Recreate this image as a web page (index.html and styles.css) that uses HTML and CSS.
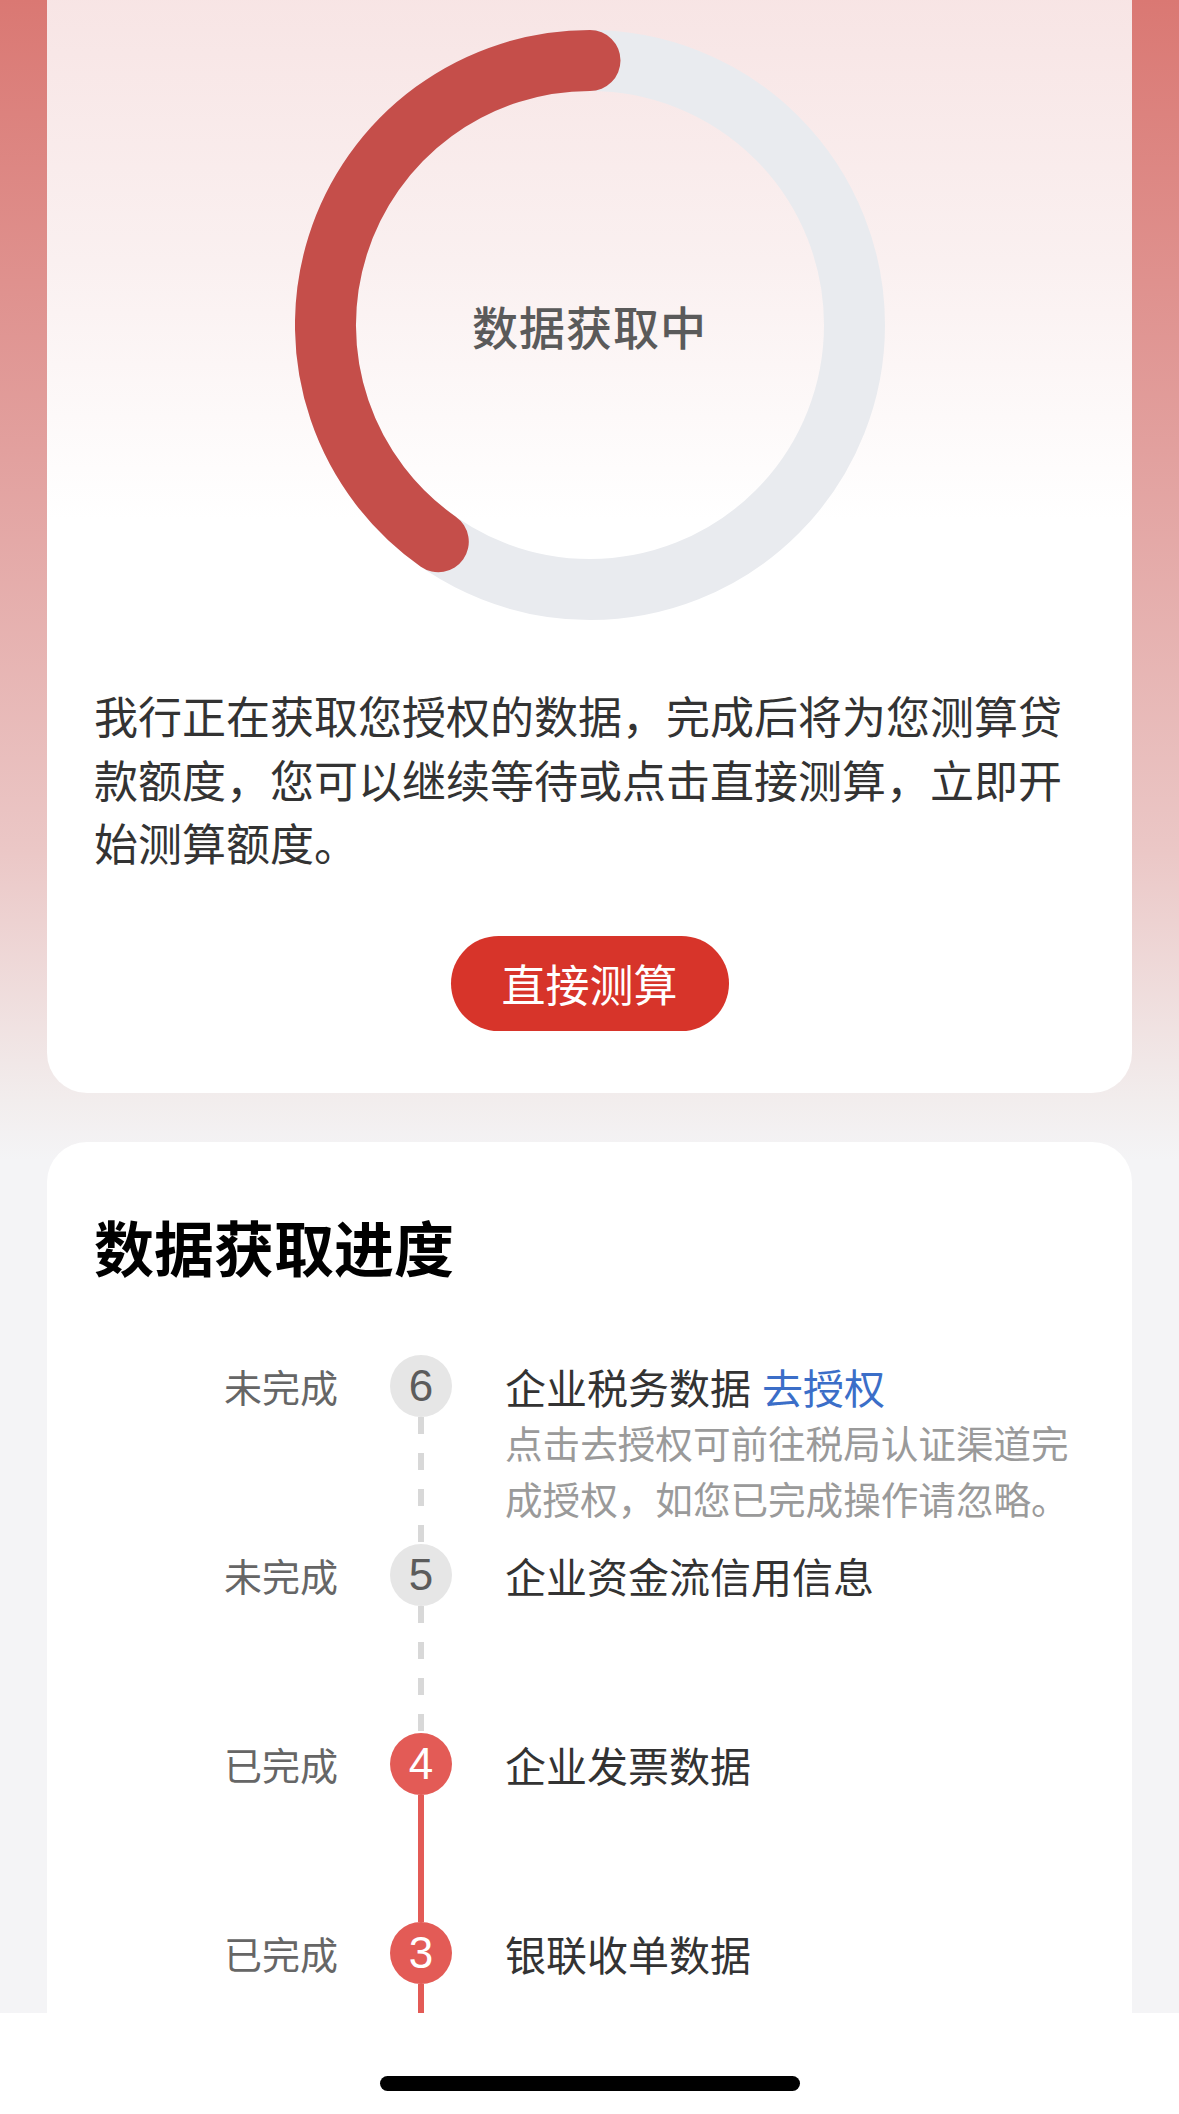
FILE: index.html
```html
<!DOCTYPE html>
<html lang="zh-CN">
<head>
<meta charset="utf-8">
<title>数据获取中</title>
<link rel="stylesheet" href="styles.css">
</head>
<body>
<div class="page">
  <section class="card card-status">
    <div class="ring-wrap">
      <svg class="ring" width="590" height="590" viewBox="0 0 590 590">
        <circle cx="295" cy="295" r="264.5" fill="none" stroke="#e9ebef" stroke-width="61"/>
        <path d="M295 30.5 A264.5 264.5 0 0 0 143.3 511.7" fill="none" stroke="#c54e4a" stroke-width="61" stroke-linecap="round"/>
      </svg>
      <div class="ring-label">数据获取中</div>
    </div>
    <p class="desc">我行正在获取您授权的数据，完成后将为您测算贷款额度，您可以继续等待或点击直接测算，立即开始测算额度。</p>
    <div class="btn-row"><button class="btn" type="button">直接测算</button></div>
  </section>

  <section class="card card-progress">
    <h2 class="title">数据获取进度</h2>
    <ol class="timeline">
      <li class="step">
        <span class="step-label">未完成</span>
        <div class="axis"><span class="dot dot-pending">6</span><span class="line line-dashed"></span></div>
        <div class="step-body">
          <div class="step-title">企业税务数据<a class="link">去授权</a></div>
          <div class="step-note">点击去授权可前往税局认证渠道完成授权，如您已完成操作请忽略。</div>
        </div>
      </li>
      <li class="step">
        <span class="step-label">未完成</span>
        <div class="axis"><span class="dot dot-pending">5</span><span class="line line-dashed"></span></div>
        <div class="step-body">
          <div class="step-title">企业资金流信用信息</div>
        </div>
      </li>
      <li class="step">
        <span class="step-label">已完成</span>
        <div class="axis"><span class="dot dot-done">4</span><span class="line line-solid"></span></div>
        <div class="step-body">
          <div class="step-title">企业发票数据</div>
        </div>
      </li>
      <li class="step">
        <span class="step-label">已完成</span>
        <div class="axis"><span class="dot dot-done">3</span><span class="line line-solid"></span></div>
        <div class="step-body">
          <div class="step-title">银联收单数据</div>
        </div>
      </li>
    </ol>
  </section>
</div>
<div class="home-bar"><span class="home-pill"></span></div>
</body>
</html>
```

FILE: styles.css
```css
* { box-sizing: border-box; }

html, body {
  margin: 0;
  padding: 0;
}

body {
  width: 1179px;
  height: 2114px;
  overflow: hidden;
  font-family: "Noto Sans CJK SC", "Noto Sans", sans-serif;
  background: linear-gradient(to bottom, #da7873 0px, #e2a09e 450px, #ebc7c6 850px, #f2eded 1100px, #f4f4f6 1160px, #f4f4f6 100%);
}

.page {
  padding: 0 47px;
}

.card {
  background: #fff;
  border-radius: 40px;
  padding: 0 47px;
}

.card-status {
  margin-top: -40px;
  padding-top: 70px;
  padding-bottom: 62px;
  background: linear-gradient(to bottom, #f7e3e3 0px, #faf0f0 300px, #ffffff 560px, #ffffff 100%);
}

.ring-wrap {
  display: grid;
  justify-content: center;
  align-items: center;
}

.ring, .ring-label {
  grid-area: 1 / 1;
}

.ring {
  display: block;
}

.ring-label {
  justify-self: center;
  font-size: 46px;
  font-weight: 500;
  color: #5a5a5a;
  letter-spacing: 1px;
}

.desc {
  margin: 64px 0 0;
  font-size: 44px;
  line-height: 63.5px;
  color: #333;
}

.btn-row {
  display: flex;
  justify-content: center;
  margin-top: 61px;
}

.btn {
  width: 278px;
  height: 95px;
  border: 0;
  border-radius: 48px;
  background: #d7342a;
  color: #fff;
  font-family: "Noto Sans CJK SC", sans-serif;
  font-size: 44px;
  padding: 0;
}

.card-progress {
  margin-top: 49px;
  padding-top: 64px;
  height: 972px;
  border-radius: 40px 40px 0 0;
}

.title {
  margin: 0;
  font-size: 60px;
  line-height: 80px;
  font-weight: 700;
  color: #000;
}

.timeline {
  list-style: none;
  margin: 69px 0 0;
  padding: 0 0 0 130px;
}

.step {
  display: flex;
  height: 189px;
}

.step-label {
  width: 114px;
  font-size: 38px;
  line-height: 62px;
  color: #666;
  white-space: nowrap;
}

.axis {
  width: 62px;
  margin: 0 53px 0 52px;
  display: flex;
  flex-direction: column;
  align-items: center;
}

.dot {
  width: 62px;
  height: 62px;
  flex: none;
  border-radius: 50%;
  font-family: "Liberation Sans", Arial, sans-serif;
  font-size: 44px;
  line-height: 62px;
  text-align: center;
}

.dot-pending {
  background: #e6e6e6;
  color: #5c5c5c;
}

.dot-done {
  background: #e35b56;
  color: #fff;
}

.line {
  width: 6px;
  flex: 1;
}

.line-dashed {
  background: repeating-linear-gradient(to bottom, #d8d8d8 0px, #d8d8d8 17px, transparent 17px, transparent 36px);
}

.line-solid {
  background: #e35b56;
}

.step-body {
  flex: 1;
  padding-top: 3px;
}

.step-title {
  font-size: 41px;
  line-height: 56px;
  color: #333;
}

.link {
  color: #3b6ec8;
  margin-left: 11px;
}

.step-note {
  font-size: 37.6px;
  line-height: 56px;
  color: #9a9a9a;
}

.home-bar {
  position: fixed;
  left: 0;
  right: 0;
  bottom: 0;
  height: 101px;
  background: #fff;
  display: flex;
  justify-content: center;
  padding-top: 63px;
}

.home-pill {
  width: 420px;
  height: 15px;
  border-radius: 8px;
  background: #000;
}
```
